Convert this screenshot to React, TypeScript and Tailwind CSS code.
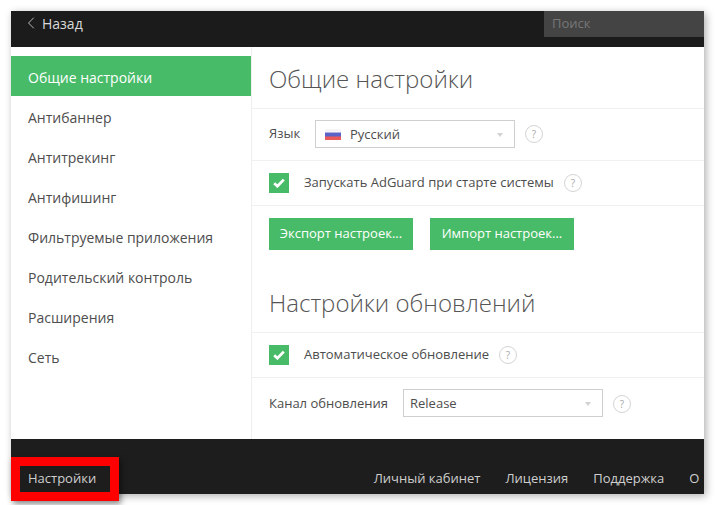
import { ChevronLeft } from 'lucide-react'
import type { ReactNode } from 'react'

const menu = [
  'Общие настройки',
  'Антибаннер',
  'Антитрекинг',
  'Антифишинг',
  'Фильтруемые приложения',
  'Родительский контроль',
  'Расширения',
  'Сеть',
]

function Help() {
  return (
    <span className="w-[18px] h-[18px] flex-none rounded-full border border-[#d4d4d4] flex items-center justify-center text-[10px] leading-none text-[#a8a8a8]">
      ?
    </span>
  )
}

function Check() {
  return (
    <span className="w-5 h-5 flex-none bg-[#47bb67] flex items-center justify-center">
      <svg width="12" height="10" viewBox="0 0 12 10" fill="none">
        <path d="M1.2 5.2 4.4 8.2 10.8 1.6" stroke="#fff" strokeWidth="2.8" />
      </svg>
    </span>
  )
}

function Select({ children }: { children: ReactNode }) {
  return (
    <div className="w-[200px] h-[28px] flex-none border border-[#cfcfcf] flex items-center pt-[1px] pl-[6px] pr-[11px] text-[13px] text-[#4d4d4d]">
      {children}
      <span className="ml-auto w-0 h-0 border-x-[3px] border-x-transparent border-t-[4px] border-t-[#d2d2d2]" />
    </div>
  )
}

function GreenButton({ children }: { children: ReactNode }) {
  return (
    <button className="w-[144px] h-[32px] bg-[#47bb67] text-white text-[13px] text-center">
      {children}
    </button>
  )
}

export default function App() {
  return (
    <div className="relative w-[715px] h-[505px] bg-white pt-[11px] pl-[11px] overflow-hidden font-['Open_Sans',sans-serif]">
      <div className="w-[693px] h-[483px] flex flex-col bg-white shadow-[2px_2px_8px_rgba(0,0,0,0.32)]">
        <header className="h-[36px] flex-none bg-[#1b1b1b] flex items-start">
          <div className="flex items-center h-[24px] pl-[10px] text-[14px] text-[#d9d9d9]">
            <ChevronLeft size={20} strokeWidth={1} />
            <span className="ml-[1px]">Назад</span>
          </div>
          <div className="ml-auto w-[160px] h-[26px] bg-[#444444] pl-[8px] flex items-center text-[13px] text-[#777777]">
            Поиск
          </div>
        </header>

        <div className="flex-auto flex min-h-0">
          <nav className="w-[241px] flex-none pt-[9px] border-r border-[#f0f0f0] text-[14px] text-[#4d4d4d]">
            {menu.map((item, i) => (
              <div
                key={item}
                className={
                  i === 0
                    ? 'h-[40px] pl-[17px] pt-[2px] flex items-center bg-[#47bb67] text-white'
                    : 'h-[40px] pl-[17px] pt-[2px] flex items-center'
                }
              >
                {item}
              </div>
            ))}
          </nav>

          <main className="flex-auto text-[13px] text-[#4d4d4d]">
            <h1 className="h-[62px] pl-[17px] pt-[2px] flex items-center text-[24px] font-light text-[#555555] border-b border-[#f0f0f0]">
              Общие настройки
            </h1>
            <div className="h-[52px] pl-[17px] pb-[1px] flex items-center border-b border-[#f0f0f0]">
              <span className="w-[46px]">Язык</span>
              <Select>
                <span className="w-[16px] h-[11px] mx-[3px] bg-[linear-gradient(#f4f4f8_0%,#f4f4f8_25%,#5a64c8_40%,#5a64c8_60%,#ea5a5a_75%,#ea5a5a_100%)]" />
                <span className="ml-[6px]">Русский</span>
              </Select>
              <span className="ml-[10px]">
                <Help />
              </span>
            </div>
            <div className="h-[45px] pl-[17px] flex items-center border-b border-[#f0f0f0]">
              <Check />
              <span className="ml-[15px]">Запускать AdGuard при старте системы</span>
              <span className="ml-[10px]">
                <Help />
              </span>
            </div>
            <div className="pl-[17px] pt-[12px] flex gap-[17px]">
              <GreenButton>Экспорт настроек...</GreenButton>
              <GreenButton>Импорт настроек...</GreenButton>
            </div>
            <h2 className="h-[83px] pl-[17px] pt-[24px] flex items-center text-[24px] font-light text-[#555555] border-b border-[#f0f0f0]">
              Настройки обновлений
            </h2>
            <div className="h-[45px] pl-[17px] flex items-center border-b border-[#f0f0f0]">
              <Check />
              <span className="ml-[15px]">Автоматическое обновление</span>
              <span className="ml-[10px]">
                <Help />
              </span>
            </div>
            <div className="h-[61px] pl-[17px] pb-[11px] flex items-center">
              <span className="w-[134px] pt-[1px]">Канал обновления</span>
              <Select>
                <span>Release</span>
              </Select>
              <span className="ml-[10px] pt-[1px]">
                <Help />
              </span>
            </div>
          </main>
        </div>

        <footer className="h-[55px] flex-none bg-[#1d1d1d] overflow-hidden pl-[17px] pt-[30px] flex items-start text-[13px] text-[#cfcfcf] whitespace-nowrap">
          <span>Настройки</span>
          <div className="ml-[277.5px] flex gap-[25px] flex-none">
            <span>Личный кабинет</span>
            <span>Лицензия</span>
            <span>Поддержка</span>
            <span>О</span>
          </div>
        </footer>
      </div>

      {/* red frame around the settings link */}
      <div className="absolute left-[11px] top-[457px] w-[108px] h-[44px] border-[9px] border-[#ff0000] shadow-[2px_3px_6px_rgba(0,0,0,0.45)]" />
    </div>
  )
}
